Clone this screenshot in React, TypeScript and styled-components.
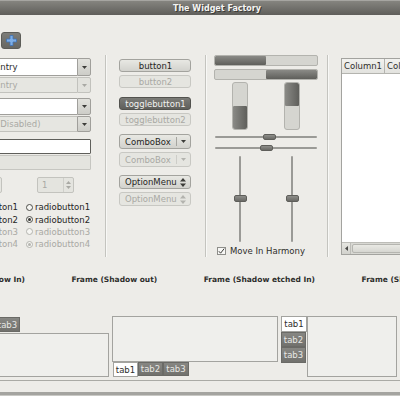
import styled, { createGlobalStyle } from "styled-components";

const GlobalStyle = createGlobalStyle`
  html, body {
    margin: 0;
    padding: 0;
    background: #ffffff;
  }
  body {
    font-family: "DejaVu Sans", "Liberation Sans", sans-serif;
    font-size: 8.5px;
    color: #2e2e2c;
  }
`;

const Window = styled.div`
  width: 400px;
  height: 396px;
  overflow: hidden;
  background: #edece8;
  display: flex;
  flex-direction: column;
`;

const TitleBar = styled.div`
  height: 14px;
  flex-shrink: 0;
  border-top: 1px solid #a6a5a1;
  background: linear-gradient(#85847f, #5f5e5a);
  display: flex;
  align-items: center;
  justify-content: center;
  padding-left: 34px;
`;

const Title = styled.span`
  font-size: 8px;
  font-weight: bold;
  color: #f4f4f2;
  text-shadow: 1px 1px 0 #3a3a37;
`;

const Toolbar = styled.div`
  height: 40px;
  flex-shrink: 0;
  box-sizing: border-box;
  padding: 17px 0 0 1px;
`;

const ToolButton = styled.div`
  width: 20px;
  height: 17px;
  box-sizing: border-box;
  border-radius: 3px;
  border: 1px solid #5c5c58;
  background: linear-gradient(#7d7d79, #666662);
  display: flex;
  align-items: center;
  justify-content: center;
`;

const Main = styled.div`
  height: 203px;
  flex-shrink: 0;
  display: grid;
  grid-template-columns: 105px 1px 99px 1px 121px 1px 1fr;
`;

const VSep = styled.div`
  background: #c4c4bf;
  box-shadow: 1px 0 0 #f8f8f6;
  height: 202px;
`;

/* ---------- left column ---------- */

const LeftCell = styled.div`
  padding-top: 3px;
`;

const LeftStack = styled.div`
  width: 111px;
  margin-left: -20px;
  display: flex;
  flex-direction: column;
`;

const Combo = styled.div<{ $h: number; $mt: number }>`
  height: ${(p) => p.$h}px;
  margin-top: ${(p) => p.$mt}px;
  display: flex;
  box-sizing: border-box;
`;

const EntryBox = styled.div<{ $disabled?: boolean; $indent?: number }>`
  flex: 1;
  box-sizing: border-box;
  border: 1px solid ${(p) => (p.$disabled ? "#c2c2bd" : "#a09f9b")};
  border-right: none;
  background: ${(p) => (p.$disabled ? "#e6e6e1" : "#ffffff")};
  color: ${(p) => (p.$disabled ? "#a9a9a4" : "#2e2e2c")};
  display: flex;
  align-items: center;
  padding-left: ${(p) => p.$indent ?? 3}px;
  white-space: nowrap;
`;

const ComboArrow = styled.div<{ $disabled?: boolean }>`
  width: 14px;
  box-sizing: border-box;
  border: 1px solid ${(p) => (p.$disabled ? "#c2c2bd" : "#a09f9b")};
  border-radius: 0 2px 2px 0;
  background: ${(p) =>
    p.$disabled ? "#e2e2dd" : "linear-gradient(#e2e2dd, #cdcdc8)"};
  display: flex;
  align-items: center;
  justify-content: center;
`;

const Entry = styled.div<{ $disabled?: boolean; $mt: number }>`
  height: 15px;
  margin-top: ${(p) => p.$mt}px;
  box-sizing: border-box;
  border: 1px solid ${(p) => (p.$disabled ? "#c6c6c1" : "#5f5f5b")};
  border-radius: 1px;
  background: ${(p) => (p.$disabled ? "#e4e4df" : "#ffffff")};
`;

const SpinRow = styled.div`
  margin-top: 7px;
  height: 16px;
  display: flex;
  gap: 35px;
`;

const SpinStub = styled.div`
  width: 22px;
  box-sizing: border-box;
  border: 1px solid #c3c3be;
  border-radius: 2px;
  background: #e6e6e1;
`;

const Spin = styled.div`
  width: 37px;
  display: flex;
  box-sizing: border-box;
  border: 1px solid #c3c3be;
  border-radius: 2px;
  background: #e4e4df;
`;

const SpinText = styled.div`
  flex: 1;
  color: #a9a9a4;
  padding-left: 4px;
  display: flex;
  align-items: center;
  border-right: 1px solid #cfcfca;
`;

const SpinArrows = styled.div`
  width: 9px;
  display: flex;
  flex-direction: column;
  align-items: center;
  justify-content: center;
  gap: 2px;
`;

const RadioGrid = styled.div`
  margin-top: 8px;
  display: grid;
  grid-template-columns: 44px 7px auto;
  column-gap: 2px;
`;

const CheckText = styled.div<{ $disabled?: boolean }>`
  height: 12.4px;
  display: flex;
  align-items: center;
  justify-content: flex-end;
  white-space: nowrap;
  margin-right: 6px;
  color: ${(p) => (p.$disabled ? "#a9a9a4" : "#262624")};
`;

const RadioCell = styled.div`
  display: flex;
  align-items: center;
`;

const RadioDot = styled.div<{ $checked?: boolean; $disabled?: boolean }>`
  width: 7px;
  height: 7px;
  box-sizing: border-box;
  border-radius: 50%;
  border: 1px solid ${(p) => (p.$disabled ? "#b4b4af" : "#4e4e4a")};
  background: #f6f6f3;
  display: flex;
  align-items: center;
  justify-content: center;
  &::after {
    content: "";
    display: ${(p) => (p.$checked ? "block" : "none")};
    width: 3px;
    height: 3px;
    border-radius: 50%;
    background: ${(p) => (p.$disabled ? "#b4b4af" : "#3c3c39")};
  }
`;

const RadioText = styled(CheckText)`
  justify-content: flex-start;
  margin: 0;
`;

/* ---------- button column ---------- */

const ButtonCell = styled.div`
  padding: 4px 0 0 13px;
`;

const ButtonStack = styled.div`
  width: 72px;
  display: flex;
  flex-direction: column;
`;

const Button = styled.div<{
  $h: number;
  $mt: number;
  $disabled?: boolean;
  $active?: boolean;
  $align?: string;
}>`
  height: ${(p) => p.$h}px;
  margin-top: ${(p) => p.$mt}px;
  box-sizing: border-box;
  border-radius: 3px;
  border: 1px solid
    ${(p) => (p.$active ? "#52524e" : p.$disabled ? "#c8c8c3" : "#a3a39e")};
  background: ${(p) =>
    p.$active
      ? "linear-gradient(#7b7b77, #5f5f5b)"
      : p.$disabled
      ? "#e5e5e0"
      : "linear-gradient(#e8e8e3, #d2d2cd)"};
  color: ${(p) => (p.$active ? "#f2f2f0" : p.$disabled ? "#a9a9a4" : "#262624")};
  display: flex;
  align-items: center;
  justify-content: ${(p) => p.$align ?? "center"};
  padding: 0 4px 0 5px;
  white-space: nowrap;
`;

const ButtonLabel = styled.span<{ $grow?: boolean }>`
  flex: ${(p) => (p.$grow ? "1" : "0 0 auto")};
`;

const ComboSep = styled.div<{ $disabled?: boolean }>`
  width: 1px;
  height: 9px;
  background: ${(p) => (p.$disabled ? "#cdcdc8" : "#a6a6a1")};
  margin-right: 4px;
`;

/* ---------- range column ---------- */

const RangeCell = styled.div`
  padding-left: 8px;
`;

const RangeStack = styled.div`
  width: 104px;
  display: flex;
  flex-direction: column;
`;

const HBar = styled.div<{ $mt: number }>`
  height: 11px;
  margin-top: ${(p) => p.$mt}px;
  box-sizing: border-box;
  border: 1px solid #b3b3ae;
  border-radius: 2px;
  background: #d5d5d0;
  position: relative;
  overflow: hidden;
`;

const Fill = styled.div`
  position: absolute;
  background: linear-gradient(#8a8a86, #5f5f5b);
  border-radius: 1px;
`;

const Halves = styled.div<{ $mt: number; $h: number }>`
  margin-top: ${(p) => p.$mt}px;
  height: ${(p) => p.$h}px;
  display: grid;
  grid-template-columns: 52px 52px;
  justify-items: center;
`;

const VBar = styled.div`
  width: 16px;
  height: 48px;
  box-sizing: border-box;
  border: 1px solid #b3b3ae;
  border-radius: 3px;
  background: #d5d5d0;
  position: relative;
  overflow: hidden;
`;

const VFill = styled(Fill)`
  background: linear-gradient(90deg, #8a8a86, #5f5f5b);
`;

const HScale = styled.div<{ $mt: number }>`
  height: 8px;
  margin-top: ${(p) => p.$mt}px;
  position: relative;
  display: flex;
  align-items: center;
  padding: 0 1px;
`;

const ScaleTrack = styled.div`
  flex: 1;
  height: 2px;
  background: #9a9a96;
  border-radius: 1px;
`;

const Knob = styled.div`
  position: absolute;
  width: 13px;
  height: 6px;
  box-sizing: border-box;
  border-radius: 2px;
  border: 1px solid #5e5e5a;
  background: linear-gradient(#8e8e8a, #6a6a66);
`;

const VScale = styled.div`
  width: 13px;
  height: 86px;
  position: relative;
  display: flex;
  justify-content: center;
`;

const VTrack = styled.div`
  width: 2px;
  height: 100%;
  background: #9a9a96;
  border-radius: 1px;
`;

const HarmonyRow = styled.div`
  margin-top: 3px;
  height: 12px;
  display: flex;
  align-items: center;
  gap: 4px;
  padding-left: 3px;
`;

const CheckBox = styled.div`
  width: 9px;
  height: 8px;
  box-sizing: border-box;
  border: 1px solid #8e8e8a;
  background: #f7f7f5;
  display: flex;
  align-items: center;
  justify-content: center;
`;

/* ---------- tree column ---------- */

const TreeCell = styled.div`
  padding: 3px 0 0 13px;
`;

const Tree = styled.div`
  width: 120px;
  height: 197px;
  box-sizing: border-box;
  border: 1px solid #a3a39f;
  background: #ffffff;
  display: flex;
  flex-direction: column;
`;

const TreeHeader = styled.div`
  height: 14px;
  display: flex;
  background: linear-gradient(#f2f2ef, #e2e2de);
  border-bottom: 1px solid #b4b4af;
`;

const HeaderCell = styled.div<{ $w: number }>`
  width: ${(p) => p.$w}px;
  flex-shrink: 0;
  display: flex;
  align-items: center;
  padding-left: 2px;
  border-right: 1px solid #b4b4af;
  white-space: nowrap;
  overflow: hidden;
`;

const TreeBody = styled.div`
  flex: 1;
`;

const HScrollbar = styled.div`
  height: 11px;
  display: flex;
  background: #d8d8d3;
  border-top: 1px solid #bdbdb8;
`;

const ScrollButton = styled.div`
  width: 9px;
  box-sizing: border-box;
  border-right: 1px solid #bdbdb8;
  background: linear-gradient(#e6e6e1, #d2d2cd);
  display: flex;
  align-items: center;
  justify-content: center;
`;

const ScrollThumb = styled.div`
  flex: 1;
  margin: 1px 0 1px 1px;
  border-radius: 2px;
  background: linear-gradient(#e9e9e4, #d6d6d1);
  border: 1px solid #b5b5b0;
`;

/* ---------- frames & notebooks ---------- */

const FrameLabels = styled.div`
  height: 32px;
  flex-shrink: 0;
  display: flex;
  align-items: center;
  gap: 46.5px;
  padding-top: 11px;
  box-sizing: border-box;
`;

const FrameLabel = styled.div<{ $lead?: boolean }>`
  flex-shrink: 0;
  display: flex;
  justify-content: flex-end;
  width: ${(p) => (p.$lead ? "25px" : "auto")};
  font-weight: bold;
  font-size: 7.5px;
  white-space: nowrap;
`;

const NotebookRow = styled.div`
  flex-shrink: 0;
  padding-top: 26px;
  height: 61px;
  display: flex;
  gap: 3px;
  margin-left: -57px;
`;

const Notebook = styled.div<{ $w: number; $dir: string }>`
  width: ${(p) => p.$w}px;
  flex-shrink: 0;
  display: flex;
  flex-direction: ${(p) => p.$dir};
`;

const TabStrip = styled.div<{ $dir: string; $pad: string }>`
  display: flex;
  flex-direction: ${(p) => p.$dir};
  padding: ${(p) => p.$pad};
  flex-shrink: 0;
`;

const Tab = styled.div<{ $current?: boolean; $w?: number; $h?: number }>`
  width: ${(p) => p.$w ?? 25}px;
  height: ${(p) => p.$h ?? 15}px;
  box-sizing: border-box;
  display: flex;
  align-items: center;
  justify-content: center;
  background: ${(p) => (p.$current ? "#ffffff" : "linear-gradient(#878783, #71716d)")};
  color: ${(p) => (p.$current ? "#2e2e2c" : "#e8e8e5")};
  border: 1px solid ${(p) => (p.$current ? "#a3a39f" : "#6a6a66")};
`;

const Panel = styled.div`
  flex: 1;
  box-sizing: border-box;
  border: 1px solid #a3a39f;
  background: #efefec;
`;

const Footer = styled.div`
  flex-shrink: 0;
  margin-top: 3px;
  height: 11px;
  border-top: 1px solid #aaaaa5;
  border-bottom: 3px solid #a4a4a0;
  box-shadow: 0 1px 0 #c9c9c5;
`;

/* ---------- icons ---------- */

const DownArrow = ({ color = "#3c3c39" }: { color?: string }) => (
  <svg width="5" height="3" viewBox="0 0 5 3">
    <path d="M0 0h5L2.5 3z" fill={color} />
  </svg>
);

const UpArrow = ({ color = "#3c3c39" }: { color?: string }) => (
  <svg width="5" height="3" viewBox="0 0 5 3">
    <path d="M0 3h5L2.5 0z" fill={color} />
  </svg>
);

const Stepper = ({ color = "#3c3c39" }: { color?: string }) => (
  <svg width="6" height="9" viewBox="0 0 6 9">
    <path d="M0 3.5h6L3 0z M0 5.5h6L3 9z" fill={color} />
  </svg>
);

const PlusIcon = () => (
  <svg width="11" height="11" viewBox="0 0 11 11">
    <path
      d="M4 0.5h3v3.5h3.5v3h-3.5v3.5h-3v-3.5h-3.5v-3h3.5z"
      fill="#7eaee6"
      stroke="#3f73b8"
      strokeWidth="0.8"
    />
  </svg>
);

const LeftArrow = () => (
  <svg width="3" height="5" viewBox="0 0 3 5">
    <path d="M3 0v5L0 2.5z" fill="#4a4a47" />
  </svg>
);

const CheckMark = () => (
  <svg width="7" height="6" viewBox="0 0 7 6">
    <path d="M0.8 3.2l1.8 2 3.6-4.6" fill="none" stroke="#3c3c39" strokeWidth="1" />
  </svg>
);

const radios = [
  { n: 1, checked: false, disabled: false },
  { n: 2, checked: true, disabled: false },
  { n: 3, checked: false, disabled: true },
  { n: 4, checked: true, disabled: true },
];

export default function App() {
  return (
    <>
      <GlobalStyle />
      <Window>
        <TitleBar>
          <Title>The Widget Factory</Title>
        </TitleBar>
        <Toolbar>
          <ToolButton>
            <PlusIcon />
          </ToolButton>
        </Toolbar>

        <Main>
          <LeftCell>
            <LeftStack>
              <Combo $h={18} $mt={0}>
                <EntryBox $indent={14}>Entry</EntryBox>
                <ComboArrow>
                  <DownArrow />
                </ComboArrow>
              </Combo>
              <Combo $h={16} $mt={1}>
                <EntryBox $disabled $indent={14}>
                  Entry
                </EntryBox>
                <ComboArrow $disabled>
                  <DownArrow color="#a9a9a4" />
                </ComboArrow>
              </Combo>
              <Combo $h={17} $mt={5}>
                <EntryBox />
                <ComboArrow>
                  <DownArrow />
                </ComboArrow>
              </Combo>
              <Combo $h={16} $mt={1}>
                <EntryBox $disabled $indent={16}>
                  (Disabled)
                </EntryBox>
                <ComboArrow>
                  <DownArrow />
                </ComboArrow>
              </Combo>
              <Entry $mt={7} />
              <Entry $mt={1} $disabled />
              <SpinRow>
                <SpinStub />
                <Spin>
                  <SpinText>1</SpinText>
                  <SpinArrows>
                    <UpArrow color="#a9a9a4" />
                    <DownArrow color="#a9a9a4" />
                  </SpinArrows>
                </Spin>
              </SpinRow>
              <RadioGrid>
                {radios.map((r) => [
                  <CheckText key={`c${r.n}`} $disabled={r.disabled}>
                    checkbutton{r.n}
                  </CheckText>,
                  <RadioCell key={`d${r.n}`}>
                    <RadioDot $checked={r.checked} $disabled={r.disabled} />
                  </RadioCell>,
                  <RadioText key={`t${r.n}`} $disabled={r.disabled}>
                    radiobutton{r.n}
                  </RadioText>,
                ])}
              </RadioGrid>
            </LeftStack>
          </LeftCell>

          <VSep />

          <ButtonCell>
            <ButtonStack>
              <Button $h={13} $mt={0}>
                <ButtonLabel>button1</ButtonLabel>
              </Button>
              <Button $h={13} $mt={3} $disabled>
                <ButtonLabel>button2</ButtonLabel>
              </Button>
              <Button $h={13} $mt={9} $active>
                <ButtonLabel>togglebutton1</ButtonLabel>
              </Button>
              <Button $h={13} $mt={3} $disabled>
                <ButtonLabel>togglebutton2</ButtonLabel>
              </Button>
              <Button $h={15} $mt={8} $align="flex-start">
                <ButtonLabel $grow>ComboBox</ButtonLabel>
                <ComboSep />
                <DownArrow />
              </Button>
              <Button $h={15} $mt={3} $disabled $align="flex-start">
                <ButtonLabel $grow>ComboBox</ButtonLabel>
                <ComboSep $disabled />
                <DownArrow color="#b3b3ae" />
              </Button>
              <Button $h={14} $mt={8} $align="flex-start">
                <ButtonLabel $grow>OptionMenu</ButtonLabel>
                <Stepper />
              </Button>
              <Button $h={14} $mt={3} $disabled $align="flex-start">
                <ButtonLabel $grow>OptionMenu</ButtonLabel>
                <Stepper color="#b3b3ae" />
              </Button>
            </ButtonStack>
          </ButtonCell>

          <VSep />

          <RangeCell>
            <RangeStack>
              <HBar $mt={0}>
                <Fill style={{ left: 0, top: 0, bottom: 0, width: "50%" }} />
              </HBar>
              <HBar $mt={3}>
                <Fill style={{ right: 0, top: 0, bottom: 0, width: "50%" }} />
              </HBar>
              <Halves $mt={2} $h={48}>
                <VBar>
                  <VFill style={{ left: 0, right: 0, bottom: 0, height: "50%" }} />
                </VBar>
                <VBar>
                  <VFill style={{ left: 0, right: 0, top: 0, height: "50%" }} />
                </VBar>
              </Halves>
              <HScale $mt={3}>
                <ScaleTrack />
                <Knob style={{ left: 49, top: 1 }} />
              </HScale>
              <HScale $mt={3}>
                <ScaleTrack />
                <Knob style={{ left: 46, top: 1 }} />
              </HScale>
              <Halves $mt={4} $h={86}>
                <VScale>
                  <VTrack />
                  <Knob style={{ left: 0, top: 39, height: 7 }} />
                </VScale>
                <VScale>
                  <VTrack />
                  <Knob style={{ left: 0, top: 39, height: 7 }} />
                </VScale>
              </Halves>
              <HarmonyRow>
                <CheckBox>
                  <CheckMark />
                </CheckBox>
                <span>Move In Harmony</span>
              </HarmonyRow>
            </RangeStack>
          </RangeCell>

          <VSep />

          <TreeCell>
            <Tree>
              <TreeHeader>
                <HeaderCell $w={40}>Column1</HeaderCell>
                <HeaderCell $w={40}>Column2</HeaderCell>
              </TreeHeader>
              <TreeBody />
              <HScrollbar>
                <ScrollButton>
                  <LeftArrow />
                </ScrollButton>
                <ScrollThumb />
              </HScrollbar>
            </Tree>
          </TreeCell>
        </Main>

        <FrameLabels>
          <FrameLabel $lead>Frame (Shadow In)</FrameLabel>
          <FrameLabel>Frame (Shadow out)</FrameLabel>
          <FrameLabel>Frame (Shadow etched In)</FrameLabel>
          <FrameLabel>Frame (Shadow etched out)</FrameLabel>
        </FrameLabels>

        <NotebookRow>
          <Notebook $w={166} $dir="column">
            <TabStrip $dir="row" $pad="1px 0 0 2px">
              <Tab $current $h={16}>tab1</Tab>
              <Tab>tab2</Tab>
              <Tab>tab3</Tab>
            </TabStrip>
            <Panel />
          </Notebook>
          <Notebook $w={166} $dir="column">
            <Panel />
            <TabStrip $dir="row" $pad="0 0 0 1px">
              <Tab $current $w={25} $h={15}>
                tab1
              </Tab>
              <Tab $w={25} $h={14}>
                tab2
              </Tab>
              <Tab $w={26} $h={14}>
                tab3
              </Tab>
            </TabStrip>
          </Notebook>
          <Notebook $w={116} $dir="row">
            <TabStrip $dir="column" $pad="0">
              <Tab $current $w={26} $h={16}>
                tab1
              </Tab>
              <Tab $w={25} $h={15}>
                tab2
              </Tab>
              <Tab $w={25} $h={16}>
                tab3
              </Tab>
            </TabStrip>
            <Panel />
          </Notebook>
        </NotebookRow>

        <Footer />
      </Window>
    </>
  );
}
